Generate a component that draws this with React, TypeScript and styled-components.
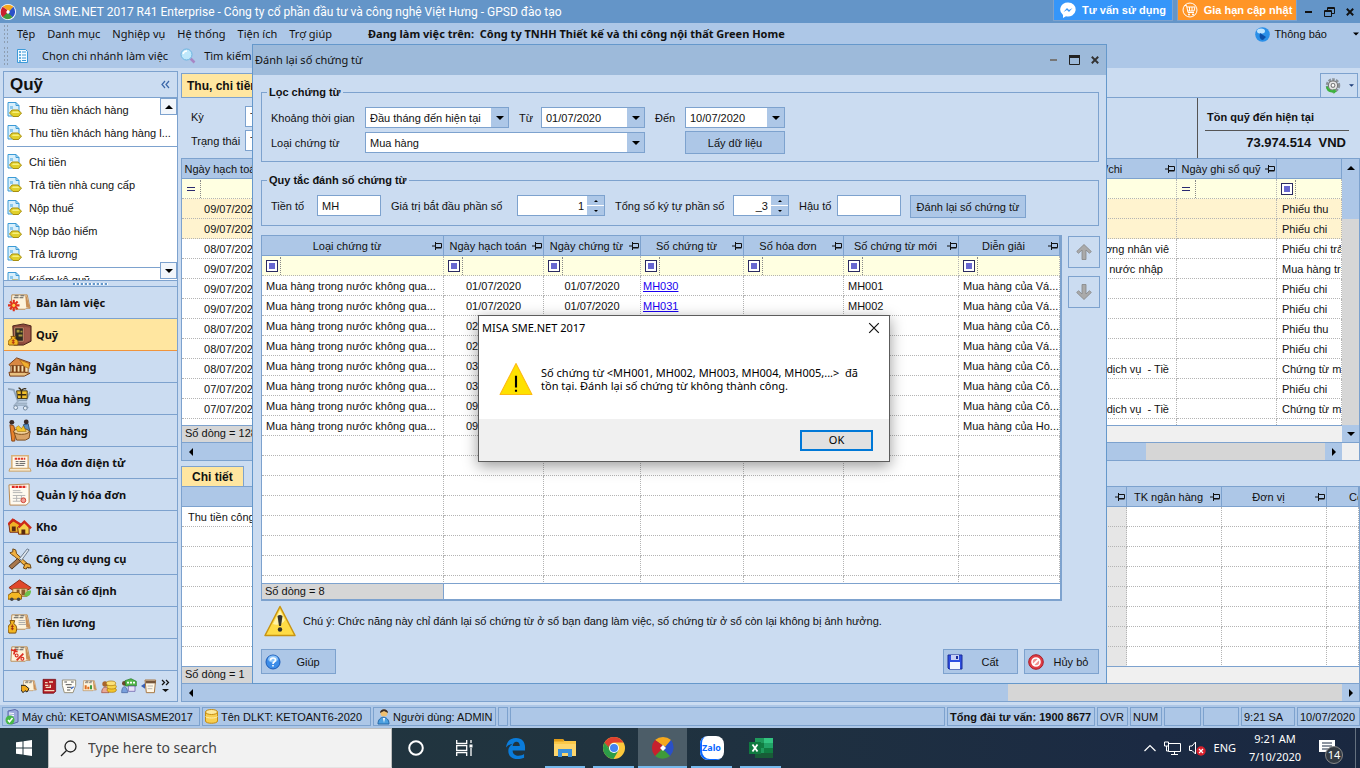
import React from "react";
import styled, { createGlobalStyle, css } from "styled-components";

const c = {
  title: "#6495c8",
  bar: "#adc7e7",
  panel: "#cbdcf1",
  line: "#7da2ce",
  edge: "#6598cb",
  amber: "#ffe6a0",
  dot: "#b4b4b4",
  track: "#d6d6d6",
  ink: "#111111",
};
const sans = `"Liberation Sans", Arial, sans-serif`;
const ui = `"Noto Sans", "Open Sans", sans-serif`;
const caption = `Roboto, "Noto Sans", sans-serif`;

const GlobalStyle = createGlobalStyle`
  * { box-sizing: border-box; }
  body { margin: 0; background: ${c.panel}; }
  button, input, select { font: inherit; color: inherit; margin: 0; border-radius: 0; }
  svg { display: block; flex: none; }
`;

/* ---------- shared pieces ---------- */

const Desktop = styled.div`
  position: relative;
  min-height: 100vh;
  display: flex;
  flex-direction: column;
  overflow: hidden;
  font: 11px/14px ${sans};
  color: ${c.ink};
`;

const PlainButton = styled.button`
  display: flex;
  align-items: center;
  justify-content: center;
  padding: 0;
  border: 0;
  background: none;
`;

const Caret = ({ dir = "down", size = 8, color = "#000" }: { dir?: "up" | "down" | "left" | "right"; size?: number; color?: string }) => {
  const turn = { down: 0, left: 90, up: 180, right: 270 }[dir];
  return (
    <svg width={size} height={size} viewBox="0 0 8 8" aria-hidden="true">
      <path d="M0 2h8L4 6z" fill={color} transform={`rotate(${turn} 4 4)`} />
    </svg>
  );
};

const Pin = () => (
  <svg width="10" height="8" viewBox="0 0 10 8" aria-hidden="true">
    <path d="M0 4h3M3.500 0v8M3.500 1.500h6v4h-6M3.500 6h6" fill="none" stroke="#111" strokeWidth="1" />
  </svg>
);

const MisaLogo = ({ size, plate }: { size: number; plate?: boolean }) => (
  <svg width={size} height={size} viewBox="0 0 24 24" aria-hidden="true">
    {plate && <circle cx="12" cy="12" r="12" fill="#fff" />}
    <path d="M4 4a12 12 0 0 1 16 0l-5 7-4-2z" fill="#f6a81c" />
    <path d="M20 4a12 12 0 0 1-1 16l-7-5 2-4z" fill="#2a50c8" />
    <path d="M19 20a12 12 0 0 1-15 0l5-8 5 3z" fill="#3f9a3a" />
    <path d="M4 20a12 12 0 0 1 0-16l7 5-1 5z" fill="#c8202e" />
    <path d="M12 9l3 3-3 3-3-3z" fill="#fff" />
  </svg>
);

/* ---------- title, menu and tool bars ---------- */

const TitleBar = styled.header`
  height: 23px;
  display: flex;
  align-items: center;
  background: ${c.title};
  color: #fff;
`;
const AppTitle = styled.h1`
  flex: 1;
  margin: 0 0 0 6px;
  font: 12px/16px ${caption};
`;
const Banner = styled(PlainButton)<{ $tone: string }>`
  width: 120px;
  height: 21px;
  margin-right: 4px;
  align-self: flex-start;
  gap: 6px;
  border: 1px solid ${c.line};
  border-top: 0;
  background: ${(p) => p.$tone};
  color: #fff;
  font: bold 11px/16px ${sans};
`;
const WinButtons = styled.div`
  display: flex;
  gap: 11px;
  padding: 0 6px 0 4px;
`;

const Bars = styled.div`
  height: 45px;
  display: grid;
  grid-template-rows: 22px 22px;
  background: ${c.bar};
  font: 11px/16px ${ui};
`;
const Bar = styled.div`
  display: flex;
  align-items: center;
  padding-left: 3px;
`;
const Grip = styled.div`
  width: 6px;
  height: 20px;
  background: radial-gradient(circle, #8d9db0 35%, transparent 40%) 0 0 / 3px 4px;
`;
const MenuNav = styled.nav`
  display: flex;
  gap: 12px;
  margin-left: 8px;
  a {
    color: inherit;
    text-decoration: none;
  }
`;
const Working = styled.strong`
  flex: 1;
  margin-left: 36px;
  white-space: pre;
`;
const Tool = styled(PlainButton)`
  gap: 11px;
  margin-left: 6px;
  & + & { margin-left: 12px; gap: 8px; }
`;
const Notice = styled(PlainButton)`
  gap: 4px;
  margin-right: 1px;
  font: 11px/16px ${sans};
  svg:last-child { margin-left: 22px; }
`;

/* ---------- body ---------- */

const Main = styled.main`
  flex: 1;
  display: flex;
  gap: 3px;
  padding-left: 3px;
  background: ${c.panel};
`;

const Side = styled.aside`
  width: 175px;
  flex: none;
  display: flex;
  flex-direction: column;
  margin-top: 3px;
  border: 1px solid ${c.line};
`;
const SideHead = styled.div`
  height: 26px;
  display: flex;
  align-items: center;
  justify-content: space-between;
  padding: 0 7px 0 6px;
  border-bottom: 1px solid ${c.line};
  h2 { margin: 0; font: bold 17px/24px ${sans}; }
`;
const TaskList = styled.div`
  position: relative;
  height: 182px;
  overflow: hidden;
  background: #fff;
  padding-left: 3px;
`;
const TaskGroup = styled.div`
  border-bottom: 1px solid ${c.line};
  padding-bottom: 2px;
  & + & { padding-top: 3px; }
  & + & + & { padding-top: 0; }
`;
const Task = styled.a`
  height: 23px;
  display: flex;
  align-items: center;
  gap: 7px;
  color: inherit;
  text-decoration: none;
`;
const ScrollKnob = styled(PlainButton)<{ $end?: boolean }>`
  position: absolute;
  right: 0;
  ${(p) => (p.$end ? "bottom: 1px;" : "top: 0;")}
  width: 17px;
  height: 17px;
  border: 1px solid ${c.line};
  background: #f2f6fb;
`;
const Splitter = styled.div`
  height: 6px;
  border-top: 1px solid ${c.line};
  display: flex;
  justify-content: center;
  align-items: center;
  &::before {
    content: "";
    width: 35px;
    height: 2px;
    background: repeating-linear-gradient(90deg, #6598cb 0 2px, #fff 2px 3px, transparent 3px 4px);
  }
`;
const Module = styled.a<{ $active?: boolean }>`
  height: 32px;
  display: flex;
  align-items: center;
  gap: 4px;
  padding-left: 4px;
  border-top: 1px solid ${c.line};
  background: ${(p) => (p.$active ? c.amber : "transparent")};
  box-shadow: ${(p) => (p.$active ? "0 1px #f0943c" : "none")};
  position: relative;
  z-index: ${(p) => (p.$active ? 1 : 0)};
  color: inherit;
  text-decoration: none;
  font: bold 11px/16px ${ui};
`;
const Shortcuts = styled.div`
  flex: 1;
  display: flex;
  align-items: center;
  gap: 4px;
  padding: 0 3px 0 17px;
  border-top: 1px solid ${c.line};
`;

const Content = styled.section`
  flex: 1;
  min-width: 0;
  display: flex;
  flex-direction: column;
`;
const TabRow = styled.div<{ $tall?: boolean }>`
  height: ${(p) => (p.$tall ? "30px" : "25px")};
  display: flex;
  align-items: flex-end;
  justify-content: space-between;
  border-bottom: ${(p) => (p.$tall ? `1px solid ${c.line}` : "0")};
`;
const Tab = styled(PlainButton)<{ $pad: number; $h: number }>`
  height: ${(p) => p.$h}px;
  padding: 0 ${(p) => p.$pad}px;
  border: 1px solid ${c.line};
  border-bottom: 0;
  background: ${c.amber};
  font: bold 12px/16px ${sans};
`;
const GearButton = styled(PlainButton)`
  width: 38px;
  height: 24px;
  gap: 8px;
  margin-right: 2px;
  border: 1px solid ${c.line};
  border-bottom: 0;
`;
const Summary = styled.div`
  height: 60px;
  display: flex;
  justify-content: space-between;
`;
const SummaryForm = styled.div`
  display: grid;
  grid-template-columns: 54px 120px;
  grid-template-rows: 21px 21px;
  row-gap: 3px;
  align-items: center;
  padding: 8px 0 0 10px;
`;
const Balance = styled.div`
  width: 163px;
  padding: 10px 11px 0 7px;
  border-left: 1px solid #555;
  h3 { margin: 0; padding: 0 2px 4px; font: bold 11px/18px ${sans}; border-bottom: 1px solid #555; }
  p { margin: 2px 3px 0; text-align: right; white-space: pre; font: bold 13px/20px ${sans}; }
`;

const GridRegion = styled.div<{ $h: number }>`
  display: flex;
  height: ${(p) => p.$h}px;
  border: 1px solid ${c.line};
  border-bottom: 0;
  background: #f0f0f0;
`;
const GridView = styled.div`
  flex: 1;
  min-width: 0;
  display: flex;
  flex-direction: column;
`;
const Clip = styled.div`
  flex: 1;
  min-height: 0;
  overflow: hidden;
  background: #fff;
`;

const Table = styled.table`
  width: 100%;
  table-layout: fixed;
  border-collapse: separate;
  border-spacing: 0;
  th, td {
    height: 20px;
    padding: 0 4px;
    overflow: hidden;
    white-space: pre;
    font-weight: normal;
    line-height: 14px;
  }
  th {
    background: ${c.bar};
    border-right: 1px solid ${c.line};
    border-bottom: 1px solid ${c.line};
  }
  td {
    border-right: 1px dotted ${c.dot};
    border-bottom: 1px dotted ${c.dot};
    text-align: left;
  }
  a { color: #1a00f0; }
`;
const HeadCell = styled.span`
  display: flex;
  align-items: center;
  margin: 0 -3px 0 -4px;
  span { flex: 1; overflow: hidden; text-align: center; }
`;
const CutHead = styled.th`
  ${Table} && {
    padding: 0 0 0 22px;
    text-align: left;
  }
`;
const FilterRow = styled.tr`
  background: #ffffe1;
`;
const Row = styled.tr<{ $hot?: boolean }>`
  background: ${(p) => (p.$hot ? "#fff3cf" : "#fff")};
`;
const Cell = styled.td<{ $align?: "right" | "center"; $tint?: string; $pad?: number }>`
  ${Table} && {
    ${(p) => p.$align && css`text-align: ${p.$align};`}
    ${(p) => p.$tint && css`background: ${p.$tint};`}
    ${(p) => p.$pad && css`padding-left: ${p.$pad}px; padding-right: ${p.$pad}px;`}
  }
`;
const Mark = styled.span<{ $equals?: boolean }>`
  display: flex;
  align-items: center;
  width: 15px;
  height: 18px;
  border-right: 1px dotted #888;
  &::before {
    content: "";
    box-sizing: border-box;
    ${(p) =>
      p.$equals
        ? "width: 8px; height: 4px; margin-left: 1px; border: solid #2a2a70; border-width: 1px 0;"
        : "width: 12px; height: 12px; border: 1px solid #2a2a60; background: #6868d0; box-shadow: inset 0 0 0 2px #fff;"}
  }
`;
const CountRow = styled.div<{ $h: number; $w: number }>`
  height: ${(p) => p.$h}px;
  flex: none;
  display: flex;
  border-top: 1px solid ${c.line};
  span {
    width: ${(p) => p.$w}px;
    padding-left: 3px;
    border-right: 1px solid ${c.line};
    background: ${c.track};
    line-height: 15px;
  }
`;

const HBarBox = styled.div`
  height: 19px;
  display: flex;
  border: 1px solid ${c.line};
  background: ${c.bar};
`;
const Knob = styled(PlainButton)`
  width: 17px;
  height: 17px;
  flex: none;
  background: ${c.bar};
`;
const Fill = styled.div`flex: 1;`;
const Track = styled.div<{ $w: number }>`
  width: ${(p) => p.$w}px;
  background: ${c.track};
`;
const Corner = styled.div`
  width: 17px;
  background: #f0f0f0;
`;
const VBar = styled.div`
  width: 17px;
  display: flex;
  flex-direction: column;
  background: ${c.track};
`;
const VThumb = styled.div`
  height: 43px;
  background: ${c.bar};
`;
const Gap = styled.div`flex: 1;`;

const HBar = ({ track, corner }: { track: number; corner?: boolean }) => (
  <HBarBox>
    <Knob aria-label="Cuộn trái"><Caret dir="left" /></Knob>
    <Fill />
    <Track $w={track} />
    <Knob aria-label="Cuộn phải"><Caret dir="right" /></Knob>
    {corner && <Corner />}
  </HBarBox>
);

const Head = ({ text }: { text: string }) => (
  <th scope="col">
    <HeadCell><span>{text}</span><Pin /></HeadCell>
  </th>
);

/* ---------- status bar ---------- */

const StatusBar = styled.footer`
  height: 26px;
  display: flex;
  gap: 2px;
  padding: 2px 0 2px 2px;
  background: ${c.bar};
  border-top: 3px solid ${c.panel};
`;
const Status = styled.div<{ $w?: number; $bold?: boolean }>`
  ${(p) => (p.$w ? `width: ${p.$w}px;` : "flex: 1;")}
  display: flex;
  align-items: center;
  gap: 3px;
  padding: 0 2px;
  border: 1px solid ${c.line};
  white-space: nowrap;
  overflow: hidden;
  font-weight: ${(p) => (p.$bold ? "bold" : "normal")};
`;

/* ---------- form controls ---------- */

const inputBox = css`
  height: 21px;
  border: 1px solid ${c.line};
  background: #fff;
`;
const TextBox = styled.input<{ $w: number }>`
  ${inputBox}
  width: ${(p) => p.$w}px;
  padding: 0 4px;
`;
const Combo = styled.div<{ $w: number }>`
  ${inputBox}
  width: ${(p) => p.$w}px;
  display: grid;
  grid-template-columns: 1fr 17px;
  select, input {
    grid-area: 1 / 1 / 2 / 3;
    min-width: 0;
    width: 100%;
    padding: 0 4px;
    border: 0;
    background: none;
    appearance: none;
    outline: 0;
  }
  > span { grid-area: 1 / 2; pointer-events: none; }
`;
const DropMark = styled.span`
  display: flex;
  align-items: center;
  justify-content: center;
  background: ${c.bar};
`;
const Spinner = styled.div<{ $w: number }>`
  ${inputBox}
  width: ${(p) => p.$w}px;
  display: flex;
  input {
    flex: 1;
    min-width: 0;
    padding: 0 3px;
    border: 0;
    outline: 0;
    text-align: right;
  }
`;
const SpinKeys = styled.div`
  width: 17px;
  display: grid;
  grid-template-rows: 1fr 1fr;
  gap: 1px;
  button { background: ${c.bar}; }
`;
const Push = styled(PlainButton)<{ $w: number; $h?: number }>`
  width: ${(p) => p.$w}px;
  height: ${(p) => p.$h ?? 23}px;
  border: 1px solid ${c.line};
  background: ${c.bar};
`;

/* ---------- renumber dialog ---------- */

const Dialog = styled.section`
  position: absolute;
  z-index: 2;
  left: 252px;
  top: 44px;
  width: 855px;
  height: 640px;
  display: flex;
  flex-direction: column;
  border: 1px solid ${c.edge};
  background: ${c.panel};
`;
const DialogTitle = styled.div`
  height: 30px;
  display: flex;
  align-items: center;
  justify-content: space-between;
  padding: 0 7px 0 2px;
  background: #9dbada;
  h2 { margin: 0; font: 11px/16px ${ui}; }
  div { display: flex; gap: 11px; }
`;
const DialogBody = styled.div`
  padding: 10px 7px 0 8px;
`;
const Group = styled.fieldset`
  min-width: 0;
  margin: 0 0 11px;
  padding: 8px 9px 7px;
  border: 1px solid ${c.line};
  legend {
    margin-left: -4px;
    padding: 0 2px;
    font: bold 11px/14px ${sans};
  }
  & + & { margin-bottom: 9px; }
`;
const FilterGrid = styled.div`
  display: grid;
  grid-template-columns: 94px 144px 32px 104px 40px 100px;
  row-gap: 3px;
  align-items: center;
`;
const InsetLabel = styled.label`
  padding-left: 10px;
`;
const Wide = styled.div`
  grid-column: 2 / 5;
`;
const LastCell = styled.div`
  grid-column: 6;
`;
const RuleRow = styled.div`
  display: flex;
  align-items: flex-start;
`;
const RuleLabel = styled.label<{ $w: number }>`
  width: ${(p) => p.$w}px;
  flex: none;
  line-height: 23px;
  &:not(:first-child) { padding-left: 10px; }
`;
const RuleGap = styled.span`
  width: 9px;
`;
const VoucherArea = styled.div`
  display: flex;
  gap: 6px;
`;
const VoucherGrid = styled.div`
  width: 801px;
  height: 366px;
  display: flex;
  flex-direction: column;
  border: 1px solid ${c.line};
  border-right-width: 2px;
  border-bottom-width: 2px;
  background: #fff;
`;
const Movers = styled.div`
  display: flex;
  flex-direction: column;
  gap: 8px;
  padding-top: 1px;
`;
const Mover = styled(PlainButton)`
  width: 32px;
  height: 32px;
  border: 1px solid ${c.line};
`;
const Hint = styled.p`
  height: 30px;
  display: flex;
  align-items: center;
  gap: 7px;
  margin: 5px 0 13px 3px;
`;
const Actions = styled.div`
  display: flex;
  gap: 6px;
  button { justify-content: flex-start; padding-left: 3px; }
  button span { flex: 1; text-align: center; }
`;

/* ---------- message box ---------- */

const MessageBox = styled.section`
  position: absolute;
  z-index: 3;
  left: 478px;
  top: 315px;
  width: 412px;
  height: 147px;
  display: flex;
  flex-direction: column;
  border: 1px solid #5c5c5c;
  background: #fff;
  box-shadow: 0 4px 14px rgba(0, 0, 0, 0.4);
  color: #000;
`;
const MessageHead = styled.div`
  display: flex;
  align-items: center;
  justify-content: space-between;
  height: 24px;
  padding: 0 9px 0 3px;
  h2 { margin: 0; font: 11px/16px ${ui}; }
`;
const MessageText = styled.div`
  flex: 1;
  display: flex;
  align-items: center;
  gap: 8px;
  padding: 0 0 2px 20px;
  font: 11px/13px ${ui};
  p { margin: 0; white-space: pre; }
`;
const MessageFoot = styled.div`
  height: 42px;
  display: flex;
  align-items: center;
  justify-content: flex-end;
  padding-right: 16px;
  background: #f0f0f0;
`;
const OkButton = styled.button`
  width: 73px;
  height: 21px;
  padding: 0;
  border: 2px solid #0078d7;
  background: #e1e1e1;
  font: 11px/14px ${ui};
`;

/* ---------- taskbar ---------- */

const Taskbar = styled.nav`
  height: 40px;
  display: flex;
  background: linear-gradient(90deg, #22373f, #20333f 45%, #1b2a43 85%, #1a2840);
  color: #fff;
  font: 11px/18px ${ui};
`;
const Start = styled(PlainButton)`
  width: 48px;
`;
const Search = styled.label`
  width: 344px;
  display: flex;
  align-items: center;
  gap: 11px;
  padding-left: 11px;
  border: 1px solid #bdbdbd;
  border-bottom-color: #e4e4e4;
  background: #f2f2f2;
  input {
    flex: 1;
    min-width: 0;
    padding: 0;
    border: 0;
    background: none;
    font: 14px/20px ${ui};
    outline: 0;
  }
  input::placeholder { color: #444; opacity: 1; }
`;
const Apps = styled.div`
  flex: 1;
  display: flex;
  padding-left: 1px;
`;
const AppKey = styled(PlainButton)<{ $open?: boolean; $front?: boolean; $w?: number }>`
  position: relative;
  width: ${(p) => p.$w ?? 49}px;
  ${(p) => p.$front && "background: #4c5d68;"}
  ${(p) =>
    p.$open &&
    css`
      &::after {
        content: "";
        position: absolute;
        left: ${p.$front ? 0 : 4}px;
        right: ${p.$front ? 0 : 4}px;
        bottom: 0;
        height: 2px;
        background: #76b9ed;
      }
    `}
`;
const Tray = styled.div`
  display: flex;
  align-items: center;
  margin-right: 4px;
  padding-right: 7px;
  border-right: 1px solid #65717f;
`;
const Indicators = styled.div`
  display: flex;
  align-items: center;
  gap: 8px;
  padding-right: 8px;
`;
const Clock = styled.div`
  width: 62px;
  text-align: center;
`;
const Alerts = styled(PlainButton)`
  position: relative;
  width: 42px;
  height: 40px;
`;
const AlertCount = styled.span`
  position: absolute;
  left: 19px;
  top: 18px;
  width: 18px;
  height: 18px;
  border: 1px solid #888;
  border-radius: 9px;
  background: #333a42;
  font: 11px/16px ${ui};
  text-align: center;
`;

/* ---------- drawings ---------- */

const Svg = ({ w, h = w, box, children }: { w: number; h?: number; box: string; children: React.ReactNode }) => (
  <svg width={w} height={h} viewBox={box} aria-hidden="true">{children}</svg>
);

const CoinDoc = () => (
  <Svg w={15} box="0 0 15 15">
    <path d="M1 .5h8l3 3V14H1z" fill="#d8effc" stroke="#3c9bd6" />
    <path d="M9 .5v3h3" fill="none" stroke="#3c9bd6" />
    <path d="M3 4h3v3H3z" fill="#8cc8ee" />
    <path d="M2.500 11l2.500-3h6l3.500 3-3 3.500H6z" fill="#e0d02a" stroke="#a88f10" />
    <path d="M6 9.500h5l1.500 1.500H5z" fill="#f7ef7c" />
  </Svg>
);

const Scroll = ({ children }: { children?: React.ReactNode }) => (
  <>
    <path d="M4 4h16l3 14h-4l-1 1H3z" fill="#fdf3dc" stroke="#b98d58" />
    <path d="M19 4l4 14-4-1-1-12z" fill="#c98f56" />
    <path d="M7 5h4M13 5h4M6 7h5M12 7h4" stroke="#555" />
    {children}
  </>
);

const moduleArt: Record<string, React.ReactNode> = {
  desk: (
    <Scroll>
      <path d="M6 9v12M0 15h12M2 11l8 8M10 11l-8 8" stroke="#e0301c" strokeWidth="2.200" />
      <circle cx="6" cy="15" r="2.200" fill="#ffd24a" stroke="#e0301c" />
    </Scroll>
  ),
  safe: (
    <>
      <path d="M5 3l11-2 8 2v16l-8 4H6z" fill="#8d4a3c" stroke="#4a211b" />
      <path d="M7 5h9v14H7z" fill="#2e2a20" stroke="#c38a6a" />
      <path d="M9 7h3v3H9zM13 8h2v2h-2zM11 12h4v2h-4z" fill="#a99a3c" />
      <path d="M17 4l6 1v13l-6 3z" fill="#a35a4a" />
      <path d="M3 14h5l-1 2c4 2 4 4 3 7H1c-2-3-1-5 3-7z" fill="#f3b722" stroke="#8a5a08" />
      <path d="M5.500 17v5M4 18.500h3M4 20.500h3" stroke="#b03010" />
    </>
  ),
  bank: (
    <>
      <path d="M1 10l8-7 14 5-1 4H3z" fill="#d98842" stroke="#7a3c12" />
      <path d="M3 11h18v7H3z" fill="#f6dfae" stroke="#8d5b2c" />
      <path d="M5 11v7M9 11v7M13 11v7M17 11v7" stroke="#7a3c12" strokeWidth="2" />
      <path d="M1 18h16l6 1-6 3H2z" fill="#e8c080" stroke="#7a3c12" />
      <path d="M12 5l10 4v5l-5-2z" fill="#f0b030" stroke="#a05c14" strokeWidth=".6" />
    </>
  ),
  cart: (
    <>
      <path d="M0 2l6 1 4 11h9l4-9" fill="none" stroke="#8ea3b8" strokeWidth="1.800" />
      <path d="M9 4h11v8H10z" fill="#f2c12c" stroke="#4a3a10" />
      <path d="M11 1c2 0 2 2 3 3 1-2 2-3 5-2M14 4v8M10 8h9" fill="none" stroke="#3a2a10" strokeWidth="1.500" />
      <path d="M11 14l-4 5h12l2 3M8 17h12" fill="none" stroke="#9fb2c6" strokeWidth="1.800" />
      <circle cx="8" cy="21.500" r="2" fill="#e6eef6" stroke="#6f859c" />
      <circle cx="18" cy="22" r="2" fill="#e6eef6" stroke="#6f859c" />
    </>
  ),
  shop: (
    <>
      <path d="M2 6l4 1 2 8-1 8H4z" fill="#e8822c" stroke="#8a4412" />
      <circle cx="4" cy="3.500" r="2.500" fill="#3a2a28" />
      <path d="M16 6l5-1 2 9-4 1z" fill="#5a8ec0" stroke="#2c5078" />
      <circle cx="19" cy="3" r="2.500" fill="#3a2a28" />
      <path d="M6 13h17l-1 7-4 2H9z" fill="#d9a468" stroke="#7c4c1c" />
      <ellipse cx="14" cy="13" rx="8" ry="3" fill="#f0cf98" stroke="#7c4c1c" />
      <path d="M8 9l3-2 3 3 2-3 3 6h-9z" fill="#f4c52a" stroke="#98700c" strokeWidth=".6" />
    </>
  ),
  einvoice: (
    <>
      <path d="M4 5h17v14H4z" fill="#fff9ec" stroke="#d8b078" strokeWidth="1.600" />
      <path d="M2 18h21l1 3H1z" fill="#f6ead0" stroke="#c39048" strokeWidth=".8" />
      <path d="M7 8h11" stroke="#e03828" strokeWidth="2" strokeDasharray="2.500 .7" />
      <path d="M8 11h3M12 11h6M8 13h3M12 13h6M8 15h9" stroke="#666" />
    </>
  ),
  invoices: (
    <>
      <path d="M1 2l21-1v19l-3 3H2z" fill="#fffaf0" stroke="#b9854a" />
      <path d="M4 4h15" stroke="#e02820" strokeWidth="2.500" strokeDasharray="3 .7" />
      <path d="M5 8h8M5 10h10M5 13h13M5 16h13M5 19h8M9 13v6M14 13v6" stroke="#b4b4b4" />
      <circle cx="16" cy="18" r="2.500" fill="#f0a098" stroke="#d04030" />
    </>
  ),
  store: (
    <>
      <path d="M1 10l6-5 5 5v8H2z" fill="#f0b226" stroke="#7a2a10" />
      <path d="M10 13l7-6 5 6v7H11z" fill="#f6cf4a" stroke="#7a2a10" />
      <path d="M0 10l5-5 8 5M11 13l6-6 7 7" fill="none" stroke="#cc2a1a" strokeWidth="2.500" />
      <path d="M4 12h4v5H4zM14 15h4v5h-4z" fill="#5a2a10" />
    </>
  ),
  tools: (
    <>
      <path d="M4 8L2 6l3-1V2l3 1 1 4 12 11 1 4-3-1L7 10z" fill="#f0b040" stroke="#6c4410" />
      <path d="M10 12l3 3-9 8-3-3z" fill="#a8774c" stroke="#4a3420" />
      <path d="M12 12l8-10 2 1-8 11z" fill="#dfe6ee" stroke="#67788c" />
      <path d="M18 17l5 1 1 4-4-1-1 2-3-1z" fill="#f0b040" stroke="#6c4410" />
    </>
  ),
  assets: (
    <>
      <path d="M1 9l11-8 12 8-2 2H4z" fill="#e0482c" stroke="#8c2410" />
      <path d="M5 10h15v8H5z" fill="#f6d49a" stroke="#a06a2c" />
      <path d="M9 11h3v4H9zM14 11h4v6h-4z" fill="#8a5a2c" />
      <path d="M0 17l4-3h7l3 3v4H0z" fill="#f4b824" stroke="#8c5a08" />
      <circle cx="4" cy="21" r="1.800" fill="#444" />
      <circle cx="11" cy="21" r="1.800" fill="#444" />
      <path d="M17 18c0-4 3-6 7-6 0 4-2 7-7 6z" fill="#6cc04a" />
    </>
  ),
  salary: (
    <Scroll>
      <path d="M11 10h7M11 12h7M11 14h8" stroke="#aaa" />
      <path d="M2 10h5l-1 3c3 2 4 5 2 10H1c-2-5-1-8 2-10z" fill="#f3b722" stroke="#7c4c08" />
      <path d="M4.500 14v6M3 16h3M3 18.500h3" stroke="#a02c10" />
    </Scroll>
  ),
  tax: (
    <Scroll>
      <path d="M3 7l7 2M8 6l-2 6M16 11l-7 7" stroke="#dc2c20" strokeWidth="1.800" />
      <circle cx="9" cy="13" r="1.500" fill="none" stroke="#dc2c20" strokeWidth="1.200" />
      <circle cx="15" cy="16.500" r="1.500" fill="none" stroke="#dc2c20" strokeWidth="1.200" />
    </Scroll>
  ),
};

const shortcutArt: React.ReactNode[] = [
  <Scroll key="1"><path d="M0 11h6l6 5-3 5-3-2-3 3-3-4z" fill="#f0a81c" stroke="#222" strokeWidth="1.500" /></Scroll>,
  <g key="2"><path d="M3 2h19v18l-3 3H3z" fill="#b01c24" stroke="#6c0c14" /><path d="M6 7h4M12 6h6M6 11h5M14 10v5M7 14h8M5 19h15" stroke="#f2dcc0" strokeWidth="2" /></g>,
  <g key="3"><path d="M2 3h20v8l-4 11H5L2 11z" fill="#fffdf6" stroke="#98917c" strokeWidth="1.500" /><path d="M5 6h4M15 6h4M7 10h9M9 14h7M9 18h5" stroke="#555" strokeWidth="1.500" /><path d="M15 16l4-3" stroke="#3a68c8" strokeWidth="2" /></g>,
  <Scroll key="4"><path d="M7 11v6M11 13v4" stroke="#e06c1c" strokeWidth="3" /><path d="M15 11v6" stroke="#3a9a40" strokeWidth="3" /></Scroll>,
  <g key="5"><circle cx="6" cy="9" r="4" fill="#a8642c" /><path d="M1 22c0-11 10-11 11 0z" fill="#e8a898" stroke="#9c4434" /><ellipse cx="16" cy="18" rx="7" ry="3.500" fill="#f4c62c" stroke="#a87408" /><ellipse cx="16" cy="13" rx="7" ry="3.500" fill="#f8d44a" stroke="#a87408" /><ellipse cx="15" cy="8" rx="7" ry="3.500" fill="#fbe07a" stroke="#a87408" /></g>,
  <g key="6"><circle cx="5" cy="8" r="3.500" fill="#6c4428" /><path d="M1 22c0-12 8-12 9 0z" fill="#7aa0dc" stroke="#3c5c98" /><path d="M6 4l9-3 8 4v7H7z" fill="#52b848" stroke="#207420" /><path d="M11 12h10v8H11z" fill="#e8e0f8" stroke="#5c50a0" /><path d="M9 7h12" stroke="#fff" strokeWidth="2.500" strokeDasharray="3 1.500" /></g>,
  <g key="7"><path d="M6 3h16l-2 19H8z" fill="#fff7e6" stroke="#a87844" strokeWidth="1.500" /><path d="M7 4h15v4H7z" fill="#75553a" /><path d="M10 12h8M10 16h7" stroke="#999" /><path d="M0 12l6-4v8z" fill="#3a60b4" /></g>,
];

const Warning = ({ w, flat }: { w: number; flat?: boolean }) => (
  <Svg w={w} box="0 0 32 32">
    <path
      d="M16 1.500L31 30.500H1z"
      fill={flat ? "#fee100" : "#ffdc46"}
      stroke={flat ? "#fdb913" : "#c89412"}
      strokeWidth={flat ? 1 : 1.5}
      strokeLinejoin="round"
    />
    {!flat && <path d="M16 5l5 10c-2 4-8 6-12 4z" fill="#fff3a8" />}
    {flat ? (
      <path d="M16 13v11M16 26v2" stroke="#000" strokeWidth="2" />
    ) : (
      <>
        <path d="M13.500 11q2.500-2 5 0l-1.500 10h-2z" fill="#33312a" />
        <circle cx="16" cy="24.500" r="2.200" fill="#33312a" />
      </>
    )}
  </Svg>
);

const BigArrow = ({ down }: { down?: boolean }) => (
  <Svg w={16} box="0 0 16 16">
    <path
      d="M8 .500l7.300 7-1.800 1.800L10 6v9.500H6V6L2.500 9.300.7 7.500z"
      fill="#aaaaaa"
      stroke="#858585"
      strokeWidth=".8"
      transform={down ? "rotate(180 8 8)" : undefined}
    />
  </Svg>
);

const CloseMark = ({ size = 8, color = "#111", thin = false }) => (
  <Svg w={size} box="0 0 10 10">
    <path d="M1 1l8 8M9 1l-8 8" stroke={color} strokeWidth={thin ? 1 : 2.4} />
  </Svg>
);

/* ---------- data ---------- */

const menu = ["Tệp", "Danh mục", "Nghiệp vụ", "Hệ thống", "Tiện ích", "Trợ giúp"];
const taskGroups = [
  ["Thu tiền khách hàng", "Thu tiền khách hàng hàng l..."],
  ["Chi tiền", "Trả tiền nhà cung cấp", "Nộp thuế", "Nộp bảo hiểm", "Trả lương"],
  ["Kiểm kê quỹ"],
];
const modules: [string, string][] = [
  ["desk", "Bàn làm việc"], ["safe", "Quỹ"], ["bank", "Ngân hàng"], ["cart", "Mua hàng"],
  ["shop", "Bán hàng"], ["einvoice", "Hóa đơn điện tử"], ["invoices", "Quản lý hóa đơn"], ["store", "Kho"],
  ["tools", "Công cụ dụng cụ"], ["assets", "Tài sản cố định"], ["salary", "Tiền lương"], ["tax", "Thuế"],
];
const cashRows: [string, string, string][] = [
  ["09/07/2020", "", "Phiếu thu"],
  ["09/07/2020", "", "Phiếu chi"],
  ["08/07/2020", "Chi lương nhân viê", "Phiếu chi trả"],
  ["09/07/2020", "Mua hàng nước nhập  ", "Mua hàng trong"],
  ["09/07/2020", "", "Phiếu chi"],
  ["09/07/2020", "", "Phiếu chi"],
  ["08/07/2020", "", "Phiếu thu"],
  ["08/07/2020", "", "Phiếu chi"],
  ["08/07/2020", "Mua dịch vụ  - Tiề", "Chứng từ mua"],
  ["07/07/2020", "", "Phiếu chi"],
  ["07/07/2020", "Mua dịch vụ  - Tiề", "Chứng từ mua"],
];
const voucherKind = "Mua hàng trong nước không qua...";
const vouchers = [
  ["01/07/2020", "MH030", "MH001", "Mua hàng của Vá..."],
  ["01/07/2020", "MH031", "MH002", "Mua hàng của Vá..."],
  ["02/07/2020", "MH032", "MH003", "Mua hàng của Cô..."],
  ["02/07/2020", "MH033", "MH004", "Mua hàng của Vá..."],
  ["03/07/2020", "MH034", "MH005", "Mua hàng của Cô..."],
  ["03/07/2020", "MH035", "MH006", "Mua hàng của Cô..."],
  ["09/07/2020", "MH036", "MH007", "Mua hàng của Cô..."],
  ["09/07/2020", "MH037", "MH008", "Mua hàng của Ho..."],
];
const voucherHeads = ["Loại chứng từ", "Ngày hạch toán", "Ngày chứng từ", "Số chứng từ", "Số hóa đơn", "Số chứng từ mới", "Diễn giải"];
const voucherWidths = [182, 100, 97, 103, 100, 115, 101];

/* ---------- sections ---------- */

const Header = () => (
  <>
    <TitleBar>
      <MisaLogo size={16} plate />
      <AppTitle>MISA SME.NET 2017 R41 Enterprise - Công ty cổ phần đầu tư và công nghệ Việt Hưng - GPSD đào tạo</AppTitle>
      <Banner $tone="#3596fa">
        <Svg w={16} box="0 0 16 16">
          <path d="M8 .5a7.500 7 0 0 0-5 12.400V16l3-1.800A7.500 7 0 1 0 8 .5z" fill="#fff" />
          <path d="M3.500 10l3.500-4 2 2 3.500-2-3.500 4-2-2z" fill="#3596fa" />
        </Svg>
        Tư vấn sử dụng
      </Banner>
      <Banner $tone="#ff9526">
        <Svg w={16} box="0 0 16 16">
          <circle cx="8" cy="8" r="7" fill="none" stroke="#fff" />
          <path d="M2.500 3.500h2l1.500 7h6M5 5h8l-1 4H6M7.500 5v4M10 5v4" fill="none" stroke="#fff" />
          <circle cx="7" cy="12.500" r="1" fill="#fff" /><circle cx="11" cy="12.500" r="1" fill="#fff" />
        </Svg>
        Gia hạn cập nhật
      </Banner>
      <WinButtons>
        <PlainButton aria-label="Thu nhỏ"><Svg w={8} box="0 0 8 8"><path d="M0 4h7" stroke="#111" strokeWidth="2" /></Svg></PlainButton>
        <PlainButton aria-label="Khôi phục">
          <Svg w={11} h={10} box="0 0 11 10"><path d="M3.500 3V.5h7v6H8M3.500 1.500h7M.5 3.500h7v6h-7zM.5 4.500h7" fill="none" stroke="#111" /></Svg>
        </PlainButton>
        <PlainButton aria-label="Đóng"><CloseMark /></PlainButton>
      </WinButtons>
    </TitleBar>
    <Bars>
      <Bar>
        <Grip />
        <MenuNav>{menu.map((m) => <a key={m} href="#menu">{m}</a>)}</MenuNav>
        <Working>{"Đang làm việc trên:  Công ty TNHH Thiết kế và thi công nội thất Green Home"}</Working>
        <Notice>
          <Svg w={15} box="0 0 15 15">
            <circle cx="7.500" cy="7.500" r="7.300" fill="#2a8fe8" />
            <ellipse cx="6" cy="4" rx="4" ry="2.600" fill="#bfe4ff" />
            <path d="M5 6l6 4-3 3c-3 0-4-3-3-7z" fill="#0c4ea8" />
          </Svg>
          Thông báo
          <Caret size={6} />
        </Notice>
      </Bar>
      <Bar>
        <Grip />
        <Tool>
          <Svg w={16} box="0 0 16 16">
            <path d="M2.500 1.500h8l2 2v11h-10z" fill="#f2faff" stroke="#3d9ad8" />
            <path d="M4 4h2M4 7h2M4 10h2M4 13h2" stroke="#3d9ad8" strokeWidth="1.600" /><path d="M7 4h4M7 7h4M7 10h4M7 12.500h4" stroke="#3d9ad8" />
          </Svg>
          Chọn chi nhánh làm việc
        </Tool>
        <Tool>
          <Svg w={16} box="0 0 16 16">
            <path d="M10.500 10.500l4 4" stroke="#a886c4" strokeWidth="2.500" />
            <circle cx="6.500" cy="6.500" r="5.500" fill="#bfe8fb" stroke="#6cb4e0" />
            <path d="M3 6q1-3 4-3" stroke="#fff" fill="none" strokeWidth="1.500" />
          </Svg>
          Tìm kiếm
        </Tool>
      </Bar>
    </Bars>
  </>
);

const Sidebar = () => (
  <Side>
    <SideHead>
      <h2>Quỹ</h2>
      <Svg w={9} box="0 0 9 9"><path d="M4 1L1 4.500 4 8M8 1L5 4.500 8 8" fill="none" stroke="#3a66a8" strokeWidth="1.200" /></Svg>
    </SideHead>
    <TaskList>
      {taskGroups.map((g) => (
        <TaskGroup key={g[0]}>
          {g.map((t) => <Task key={t} href="#task"><CoinDoc />{t}</Task>)}
        </TaskGroup>
      ))}
      <ScrollKnob aria-label="Cuộn lên"><Caret dir="up" /></ScrollKnob>
      <ScrollKnob aria-label="Cuộn xuống" $end><Caret /></ScrollKnob>
    </TaskList>
    <Splitter />
    {modules.map(([art, name]) => (
      <Module key={art} href={`#${art}`} $active={art === "safe"}>
        <Svg w={24} box="0 0 25 25">{moduleArt[art]}</Svg>
        {name}
      </Module>
    ))}
    <Shortcuts>
      {shortcutArt.map((a, i) => <Svg key={i} w={16} box="0 0 24 24">{a}</Svg>)}
      <Svg w={9} h={14} box="0 0 9 14">
        <path d="M1 1l2.500 2.500L1 6M5 1l2.500 2.500L5 6" fill="none" stroke="#111" strokeWidth="1.300" /><path d="M1 10h7l-3.500 3z" fill="#111" />
      </Svg>
    </Shortcuts>
  </Side>
);

const CashPanel = () => (
  <Content>
    <TabRow $tall>
      <Tab $pad={5} $h={24}>Thu, chi tiền</Tab>
      <GearButton aria-label="Tùy chọn">
        <Svg w={16} box="0 0 15 15">
          <circle cx="7.500" cy="7" r="5.500" fill="none" stroke="#8b9298" strokeWidth="2.600" strokeDasharray="2.400 1.100" />
          <circle cx="7.500" cy="7" r="4.300" fill="#e8e8e8" stroke="#777" />
          <circle cx="7.500" cy="7" r="1.800" fill="#fff" stroke="#777" />
          <path d="M1 8c0 4 3 6 7 5.500V15l3-2.500L8 10v1.500C5 12 3 10 3 8z" fill="#3cb43c" />
        </Svg>
        <Caret size={5} color="#1c3c78" />
      </GearButton>
    </TabRow>
    <Summary>
      <SummaryForm>
        <label htmlFor="period">Kỳ</label>
        <Combo $w={120}><select id="period"><option>Tháng này</option></select><DropMark><Caret /></DropMark></Combo>
        <label htmlFor="state">Trạng thái</label>
        <Combo $w={120}><select id="state"><option>Tất cả</option></select><DropMark><Caret /></DropMark></Combo>
      </SummaryForm>
      <Balance>
        <h3>Tồn quỹ đến hiện tại</h3>
        <p>{"73.974.514  VND"}</p>
      </Balance>
    </Summary>
    <GridRegion $h={284}>
      <GridView>
        <Clip>
          <Table>
            <colgroup>
              <col style={{ width: 94 }} /><col /><col style={{ width: 160 }} /><col style={{ width: 100 }} /><col style={{ width: 65 }} />
            </colgroup>
            <thead><tr><Head text="Ngày hạch toán" /><th /><Head text="Lý do thu/chi" /><Head text="Ngày ghi sổ quỹ" /><th /></tr></thead>
            <tbody>
              <FilterRow><td><Mark $equals /></td><td /><td /><td><Mark $equals /></td><td><Mark /></td></FilterRow>
              {cashRows.map(([date, why, kind], i) => (
                <Row key={i} $hot={i < 2}>
                  <Cell $align="center" $pad={1}>{"  " + date}</Cell>
                  <td />
                  <Cell $align="right" $pad={7}>{why}</Cell>
                  <td />
                  <Cell $pad={5}>{kind}</Cell>
                </Row>
              ))}
              <Row><td /><td /><td /><td /><td /></Row>
            </tbody>
          </Table>
        </Clip>
        <CountRow $h={17} $w={100}><span>Số dòng = 128</span></CountRow>
      </GridView>
      <VBar>
        <Knob aria-label="Cuộn lên"><Caret dir="up" /></Knob>
        <VThumb /><Gap />
        <Knob aria-label="Cuộn xuống"><Caret /></Knob>
      </VBar>
    </GridRegion>
    <HBar track={179} corner />
    <TabRow><Tab $pad={10} $h={20}>Chi tiết</Tab></TabRow>
    <GridRegion $h={197}>
      <GridView>
        <Clip>
          <Table>
            <colgroup>
              <col style={{ width: 320 }} /><col /><col style={{ width: 95 }} /><col style={{ width: 105 }} /><col style={{ width: 32 }} />
            </colgroup>
            <thead><tr><th /><Head text="" /><Head text="TK ngân hàng" /><Head text="Đơn vị" /><CutHead scope="col">Công trình</CutHead></tr></thead>
            <tbody>
              {Array.from({ length: 8 }, (_, i) => (
                <Row key={i}>
                  <Cell $pad={6}>{i === 0 ? "Thu tiền công nợ khách hàng" : ""}</Cell>
                  <Cell $tint="#e6e6e6" /><td /><td /><td />
                </Row>
              ))}
            </tbody>
          </Table>
        </Clip>
        <CountRow $h={17} $w={100}><span>Số dòng = 1</span></CountRow>
      </GridView>
    </GridRegion>
    <HBar track={334} />
  </Content>
);

const SpinArrows = () => (
  <SpinKeys>
    <PlainButton aria-label="Tăng"><Caret dir="up" size={4} /></PlainButton>
    <PlainButton aria-label="Giảm"><Caret size={4} /></PlainButton>
  </SpinKeys>
);

const RenumberDialog = () => (
  <Dialog role="dialog" aria-labelledby="renumber-title">
    <DialogTitle>
      <h2 id="renumber-title">Đánh lại số chứng từ</h2>
      <div>
        <PlainButton aria-label="Thu nhỏ"><Svg w={8} box="0 0 8 8"><path d="M0 4h7" stroke="#777" strokeWidth="2" /></Svg></PlainButton>
        <PlainButton aria-label="Phóng to"><Svg w={11} h={10} box="0 0 11 10"><path d="M.5 1.500h10v8H.5z" fill="none" stroke="#222" /><path d="M0 0h11v3H0z" fill="#222" /></Svg></PlainButton>
        <PlainButton aria-label="Đóng"><CloseMark color="#333" /></PlainButton>
      </div>
    </DialogTitle>
    <DialogBody>
      <Group>
        <legend>Lọc chứng từ</legend>
        <FilterGrid>
          <label htmlFor="range">Khoảng thời gian</label>
          <Combo $w={144}><select id="range"><option>Đầu tháng đến hiện tại</option></select><DropMark><Caret /></DropMark></Combo>
          <InsetLabel htmlFor="from">Từ</InsetLabel>
          <Combo $w={104}><input id="from" defaultValue="01/07/2020" /><DropMark><Caret /></DropMark></Combo>
          <InsetLabel htmlFor="to">Đến</InsetLabel>
          <Combo $w={100}><input id="to" defaultValue="10/07/2020" /><DropMark><Caret /></DropMark></Combo>
          <label htmlFor="kind">Loại chứng từ</label>
          <Wide><Combo $w={280}><select id="kind"><option>Mua hàng</option></select><DropMark><Caret /></DropMark></Combo></Wide>
          <LastCell><Push $w={100}>Lấy dữ liệu</Push></LastCell>
        </FilterGrid>
      </Group>
      <Group>
        <legend>Quy tắc đánh số chứng từ</legend>
        <RuleRow>
          <RuleLabel $w={46} htmlFor="prefix">Tiền tố</RuleLabel>
          <TextBox $w={64} id="prefix" defaultValue="MH" />
          <RuleLabel $w={136} htmlFor="start">Giá trị bắt đầu phần số</RuleLabel>
          <Spinner $w={88}><input id="start" defaultValue="1" /><SpinArrows /></Spinner>
          <RuleLabel $w={128} htmlFor="digits">Tổng số ký tự phần số</RuleLabel>
          <Spinner $w={56}><input id="digits" defaultValue="_3" /><SpinArrows /></Spinner>
          <RuleLabel $w={48} htmlFor="suffix">Hậu tố</RuleLabel>
          <TextBox $w={64} id="suffix" />
          <RuleGap />
          <Push $w={116}>Đánh lại số chứng từ</Push>
        </RuleRow>
      </Group>
      <VoucherArea>
        <VoucherGrid>
          <Clip>
            <Table>
              <colgroup>{voucherWidths.map((w, i) => <col key={i} style={{ width: w }} />)}</colgroup>
              <thead><tr>{voucherHeads.map((h) => <Head key={h} text={h} />)}</tr></thead>
              <tbody>
                <FilterRow>{voucherHeads.map((h) => <td key={h}><Mark /></td>)}</FilterRow>
                {vouchers.map(([date, no, next, note]) => (
                  <Row key={no}>
                    <td>{voucherKind}</td>
                    <Cell $align="center">{date}</Cell>
                    <Cell $align="center">{date}</Cell>
                    <Cell $pad={2}><a href={`#${no}`}>{no}</a></Cell>
                    <td />
                    <td>{next}</td>
                    <td>{note}</td>
                  </Row>
                ))}
                {Array.from({ length: 8 }, (_, i) => <Row key={i}>{voucherHeads.map((h) => <td key={h} />)}</Row>)}
              </tbody>
            </Table>
          </Clip>
          <CountRow $h={16} $w={182}><span>Số dòng = 8</span></CountRow>
        </VoucherGrid>
        <Movers>
          <Mover aria-label="Lên"><BigArrow /></Mover>
          <Mover aria-label="Xuống"><BigArrow down /></Mover>
        </Movers>
      </VoucherArea>
      <Hint>
        <Warning w={32} />
        Chú ý: Chức năng này chỉ đánh lại số chứng từ ở sổ bạn đang làm việc, số chứng từ ở sổ còn lại không bị ảnh hưởng.
      </Hint>
      <Actions>
        <Push $w={75} $h={25}>
          <Svg w={16} box="0 0 16 16">
            <circle cx="8" cy="8" r="7" fill="#3c8ce8" stroke="#1c5cb8" />
            <ellipse cx="8" cy="5" rx="5" ry="3.500" fill="#8cc4fa" />
            <path d="M5.500 6.500q0-2.500 2.500-2.500t2.500 2c0 2-2.500 1.500-2.500 4M8 11v1.500" fill="none" stroke="#fff" strokeWidth="1.600" />
          </Svg>
          <span>Giúp</span>
        </Push>
        <Gap />
        <Push $w={75} $h={25}>
          <Svg w={16} box="0 0 16 16">
            <path d="M1 1h14v14H2l-1-1z" fill="#2e4ee0" stroke="#1a2c98" />
            <path d="M4 1h8v5H4z" fill="#c8d0f4" /><path d="M9 2h2v3H9z" fill="#1a2c98" /><path d="M3 8h10v7H3z" fill="#f4f6ff" />
          </Svg>
          <span>Cất</span>
        </Push>
        <Push $w={75} $h={25}>
          <Svg w={16} box="0 0 16 16">
            <circle cx="8" cy="8" r="7.300" fill="#e03c44" stroke="#a81c28" />
            <circle cx="8" cy="8" r="4" fill="#f09090" stroke="#fff" strokeWidth="1.600" /><path d="M5 11l6-6" stroke="#fff" strokeWidth="1.800" />
          </Svg>
          <span>Hủy bỏ</span>
        </Push>
      </Actions>
    </DialogBody>
  </Dialog>
);

const Alert = () => (
  <MessageBox role="alertdialog" aria-labelledby="alert-title">
    <MessageHead>
      <h2 id="alert-title">MISA SME.NET 2017</h2>
      <PlainButton aria-label="Đóng"><CloseMark size={12} thin /></PlainButton>
    </MessageHead>
    <MessageText>
      <Warning w={34} flat />
      <p>{"Số chứng từ <MH001, MH002, MH003, MH004, MH005,...>  đã\ntồn tại. Đánh lại số chứng từ không thành công."}</p>
    </MessageText>
    <MessageFoot><OkButton>OK</OkButton></MessageFoot>
  </MessageBox>
);

const StatusLine = () => (
  <StatusBar>
    <Status $w={198}>
      <Svg w={14} h={16} box="0 0 14 16">
        <path d="M3 2l7-1.500L13 2v11l-6 2-4-1z" fill="#9aa8dc" stroke="#5c68a8" /><path d="M4 4l5 .5M4 6l5 .5" stroke="#fff" />
        <circle cx="5" cy="11" r="4.500" fill="#48b848" /><path d="M3 11l1.500 1.800L7.500 9" fill="none" stroke="#fff" strokeWidth="1.500" />
      </Svg>
      <span>Máy chủ: KETOAN\MISASME2017</span>
    </Status>
    <Status $w={169}>
      <Svg w={13} h={15} box="0 0 13 15">
        <path d="M.5 3v9c0 3 12 3 12 0V3z" fill="#f8cf50" stroke="#c48c14" /><ellipse cx="6.500" cy="3" rx="6" ry="2.500" fill="#fdeaa0" stroke="#c48c14" />
        <path d="M.5 7.500c1 2 11 2 12 0" fill="none" stroke="#fff0b0" />
      </Svg>
      <span>Tên DLKT: KETOANT6-2020</span>
    </Status>
    <Status $w={123}>
      <Svg w={14} h={16} box="0 0 14 16">
        <circle cx="8" cy="4" r="3.500" fill="#f0c070" /><path d="M4 4c0-5 8-5 8 0L8 2z" fill="#3a2c24" />
        <path d="M2 15c0-9 11-9 11 0z" fill="#4ca0e0" stroke="#2468a8" /><path d="M7 9l1 5 1-5z" fill="#fff" />
      </Svg>
      <span>Người dùng: ADMIN</span>
    </Status>
    <Status $w={10} />
    <Status />
    <Status $w={148} $bold><span>Tổng đài tư vấn: 1900 8677</span></Status>
    <Status $w={31}><span>OVR</span></Status>
    <Status $w={32}><span>NUM</span></Status>
    <Status $w={37} />
    <Status $w={36} />
    <Status $w={54}><span>9:21 SA</span></Status>
    <Status $w={63}><span>10/07/2020</span></Status>
  </StatusBar>
);

const ZaloMark = styled.span`
  width: 24px;
  height: 24px;
  border-radius: 8px;
  background: #fff;
  box-shadow: inset 2px -1px 0 #0a68ff;
  color: #0a68ff;
  font: bold 9px/24px ${ui};
  text-align: center;
`;

const WindowsBar = () => (
  <Taskbar aria-label="Taskbar">
    <Start aria-label="Start">
      <Svg w={16} box="0 0 16 16"><path d="M0 2.300L6.500 1.400v6.100H0zM7.500 1.200L16 0v7.500H7.500zM0 8.500h6.500v6.100L0 13.700zM7.500 8.500H16V16l-8.500-1.200z" fill="#fff" /></Svg>
    </Start>
    <Search>
      <Svg w={17} box="0 0 17 17"><circle cx="10.500" cy="6.500" r="5.500" fill="none" stroke="#222" strokeWidth="1.300" /><path d="M6.500 10.500L1 16" stroke="#222" strokeWidth="1.300" /></Svg>
      <input placeholder="Type here to search" aria-label="Search" />
    </Search>
    <Apps>
      <AppKey $w={46} aria-label="Cortana"><Svg w={16} box="0 0 16 16"><circle cx="8" cy="8" r="6.800" fill="none" stroke="#fff" strokeWidth="2" /></Svg></AppKey>
      <AppKey $w={50} aria-label="Task View">
        <Svg w={17} h={16} box="0 0 17 16"><path d="M.7 0v3.300h10V0M.7 16v-3.300h10V16M.7 5.500h10v5H.7zM15 0v3M15 8v8" fill="none" stroke="#fff" strokeWidth="1.300" /><path d="M13.500 4.500h3v3h-3z" fill="#fff" /></Svg>
      </AppKey>
      <AppKey $w={52} aria-label="Edge">
        <Svg w={21} box="0 0 22 22"><path d="M1 10C2 3 6 0 11.500 0 18 0 21 4.500 21 9.500V13H8c0 4 3 5.500 6 5.500 2.500 0 4.500-.8 6-1.800v4C18 21.600 15.500 22 13 22 7 22 3.500 18.500 3.500 13.500c0-3 1.500-5.500 4.500-7.500C5 6.500 2.500 8 1 10zm7-1.500h7.500C15.500 5.500 14 4 12 4c-2.200 0-3.700 1.800-4 4.500z" fill="#0a7cdb" /></Svg>
      </AppKey>
      <AppKey $w={48} $open aria-label="File Explorer">
        <Svg w={22} h={18} box="0 0 22 18"><path d="M0 0h9l1.500 2H22v15H0z" fill="#fbc848" /><path d="M0 0h9l1 2.500H0z" fill="#e09c18" /><path d="M0 5h22v12H0z" fill="#fdd66c" /><path d="M4 10h14v8h-4v-4H8v4H4z" fill="#3a90dc" /></Svg>
      </AppKey>
      <AppKey $open aria-label="Chrome">
        <Svg w={22} box="0 0 22 22"><circle cx="11" cy="11" r="11" fill="#fdc83c" /><path d="M1.500 5.500A11 11 0 0 0 10.500 22l5-8.500-9 0z" fill="#2c9c48" /><path d="M1.500 5.500l5 8.500 4-7z" fill="#2c9c48" /><path d="M1.500 5.500A11 11 0 0 1 20.500 5.500H11a5.500 5.500 0 0 0-5 5z" fill="#e0402f" /><circle cx="11" cy="11" r="5" fill="#fff" /><circle cx="11" cy="11" r="4" fill="#4384f3" /></Svg>
      </AppKey>
      <AppKey $open $front aria-label="MISA SME.NET"><MisaLogo size={24} /></AppKey>
      <AppKey $open aria-label="Zalo"><ZaloMark>Zalo</ZaloMark></AppKey>
      <AppKey $open aria-label="Excel">
        <Svg w={24} h={22} box="0 0 24 22"><path d="M6 1h9v20H6z" fill="#1f9a5c" /><path d="M15 1h9v5h-9z" fill="#33c481" /><path d="M6 6h9v5H6zM15 11h9v5h-9z" fill="#107c41" /><path d="M15 6h9v5h-9z" fill="#21a366" /><path d="M6 16h18v5H6z" fill="#185c37" /><path d="M0 5h12v12H0z" fill="#0f7a40" /><path d="M3.500 7.500l5 7M8.500 7.500l-5 7" stroke="#fff" strokeWidth="1.800" /></Svg>
      </AppKey>
    </Apps>
    <Tray>
      <Indicators>
        <Svg w={12} h={8} box="0 0 12 8"><path d="M.5 7L6 1.500 11.500 7" fill="none" stroke="#fff" strokeWidth="1.200" /></Svg>
        <Svg w={17} h={14} box="0 0 17 14"><path d="M4.500 2.500h12v8h-12zM10.500 10.500v3M7 13.500h7M.5 1h4v4h-4zM2.500 5v5h2" fill="none" stroke="#fff" /></Svg>
        <Svg w={17} h={15} box="0 0 17 15"><path d="M.5 5h2.500L6.500 1v12L3 9.500H.5z" fill="none" stroke="#fff" /><circle cx="12" cy="10" r="4.700" fill="#d8202c" /><path d="M10 8l4 4M14 8l-4 4" stroke="#fff" strokeWidth="1.200" /></Svg>
        <span>ENG</span>
      </Indicators>
      <Clock>9:21 AM<br />7/10/2020</Clock>
      <Alerts aria-label="14 notifications">
        <Svg w={16} box="0 0 16 16"><path d="M0 0h16v12h-5l-3 3v-3H0z" fill="#fff" /><path d="M3 3h10M3 6h10M3 9h6" stroke="#1b2a43" /></Svg>
        <AlertCount>14</AlertCount>
      </Alerts>
    </Tray>
  </Taskbar>
);

export default function App() {
  return (
    <>
      <GlobalStyle />
      <Desktop>
        <Header />
        <Main>
          <Sidebar />
          <CashPanel />
        </Main>
        <StatusLine />
        <WindowsBar />
        <RenumberDialog />
        <Alert />
      </Desktop>
    </>
  );
}
